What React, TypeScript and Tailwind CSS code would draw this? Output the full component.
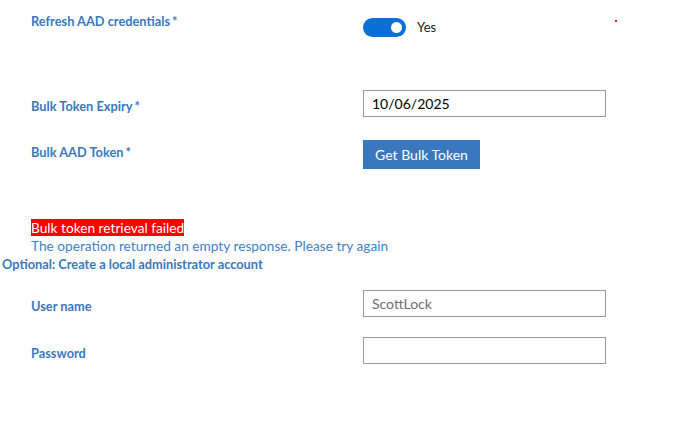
const LABEL =
  "w-[332px] shrink-0 text-[12.8px] leading-[18px] font-bold text-[#3a78bd]";

function Field({ value, muted }: { value?: string; muted?: boolean }) {
  return (
    <div
      className={`h-[27px] w-[243px] border border-[#9a9a9a] bg-white px-[8px] text-[14px] leading-[25px] ${
        muted ? "text-[#6e6e6e]" : "text-black"
      }`}
    >
      {value}
    </div>
  );
}

export default function App() {
  return (
    <div
      className="relative h-[427px] w-[690px] bg-white"
      style={{ fontFamily: 'Lato, "Open Sans", sans-serif' }}
    >
      {/* stray red pixel top right */}
      <div className="absolute left-[615px] top-[20px] h-[2px] w-[2px] bg-[#e02020]" />

      <div className="pl-[31px]">
        {/* Refresh AAD credentials */}
        <div className="flex h-[90px] items-start pt-[12px]">
          <div className={LABEL}>Refresh AAD credentials<span className="ml-[2px]">*</span></div>
          <div className="mt-[6px] flex items-center gap-[11px]">
            <div className="flex h-[19px] w-[43px] items-center justify-end rounded-full bg-[#0a6fd6] pr-[4px]">
              <div className="h-[11px] w-[11px] rounded-full bg-white" />
            </div>
            <span className="text-[13px] text-[#222]">Yes</span>
          </div>
        </div>

        {/* Bulk Token Expiry */}
        <div className="flex h-[50px] items-start">
          <div className={`${LABEL} mt-[7px]`}>Bulk Token Expiry<span className="ml-[2px]">*</span></div>
          <Field value="10/06/2025" />
        </div>

        {/* Bulk AAD Token */}
        <div className="flex h-[79px] items-start">
          <div className={`${LABEL} mt-[3px]`}>Bulk AAD Token<span className="ml-[2px]">*</span></div>
          <button className="h-[29px] w-[117px] bg-[#3a78bd] text-[14px] text-white">
            Get Bulk Token
          </button>
        </div>

        {/* Error */}
        <div className="text-[13.7px] leading-[18px]">
          <span className="bg-[#ff0000] text-white">Bulk token retrieval failed</span>
        </div>
        <div className="text-[13.7px] leading-[18px] text-[#3f82c8]">
          The operation returned an empty response. Please try again
        </div>
      </div>

      <div className="pl-[2px] text-[12.8px] leading-[18px] font-bold text-[#3a78bd]">
        Optional: Create a local administrator account
      </div>

      <div className="pl-[31px] pt-[17px]">
        <div className="flex h-[47px] items-start">
          <div className={`${LABEL} mt-[7px]`}>User name</div>
          <Field value="ScottLock" muted />
        </div>
        <div className="flex items-start">
          <div className={`${LABEL} mt-[7px]`}>Password</div>
          <Field />
        </div>
      </div>
    </div>
  );
}
